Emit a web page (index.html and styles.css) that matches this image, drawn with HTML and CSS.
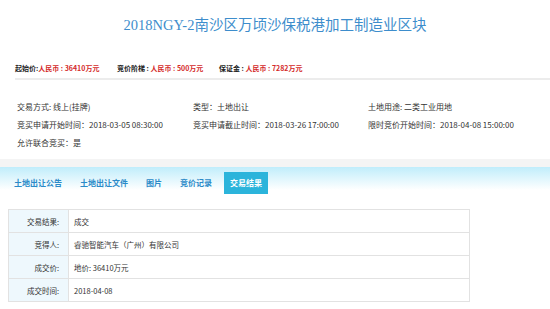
FILE: index.html
```html
<!DOCTYPE html>
<html lang="zh-CN">
<head>
    <meta charset="UTF-8">
    <title>2018NGY-2南沙区万顷沙保税港加工制造业区块</title>
    <link rel="stylesheet" href="styles.css">
</head>
<body>
    <h1 class="title">2018NGY-2南沙区万顷沙保税港加工制造业区块</h1>

    <div class="prices">
        <div class="price-item">起始价:<span class="red">人民币 : 36410万元</span></div>
        <div class="price-item">竞价阶梯 : <span class="red">人民币 : 500万元</span></div>
        <div class="price-item">保证金 : <span class="red">人民币 : 7282万元</span></div>
    </div>

    <div class="info">
        <div>交易方式: 线上(挂牌)</div>
        <div>类型：土地出让</div>
        <div>土地用途: 二类工业用地</div>
        <div>竞买申请开始时间：2018-03-05 08:30:00</div>
        <div>竞买申请截止时间：2018-03-26 17:00:00</div>
        <div>限时竞价开始时间：2018-04-08 15:00:00</div>
        <div>允许联合竞买：是</div>
    </div>

    <div class="band"></div>

    <div class="tabs">
        <div class="tab">土地出让公告</div>
        <div class="tab">土地出让文件</div>
        <div class="tab">图片</div>
        <div class="tab">竞价记录</div>
        <div class="tab active">交易结果</div>
    </div>

    <table class="result">
        <tr><th>交易结果:</th><td>成交</td></tr>
        <tr><th>竞得人:</th><td>睿驰智能汽车（广州）有限公司</td></tr>
        <tr><th>成交价:</th><td>地价: 36410万元</td></tr>
        <tr><th>成交时间:</th><td>2018-04-08</td></tr>
    </table>
</body>
</html>
```

FILE: styles.css
```css
body {
    margin: 0;
    font-family: "Noto Sans CJK SC", sans-serif;
    color: #333;
    background: #fff;
}
.title {
    margin: 0;
    padding-top: 15px;
    line-height: 20px;
    text-align: center;
    font-family: "Liberation Serif", "Noto Sans CJK SC", serif;
    font-weight: normal;
    font-size: 14.5px;
    color: #3d8dcc;
}
.prices {
    display: flex;
    margin: 27px 0 0 15px;
    padding-bottom: 4px;
    border-bottom: 2px solid #ececec;
    font-size: 7px;
    line-height: 12px;
    font-weight: bold;
    color: #222;
}
.price-item {
    width: 102px;
}
.red {
    color: #d42a2a;
}
.info {
    display: grid;
    grid-template-columns: 176px 175px 1fr;
    padding: 18px 0 0 17px;
    font-size: 8px;
    line-height: 18px;
    color: #333;
}
.band {
    margin-top: 7px;
    height: 8px;
    background: #f4f4f4;
}
.tabs {
    display: flex;
    gap: 6px;
    padding: 5px 0 0 8px;
    background: linear-gradient(#c0edfb, #fff 23px);
}
.tab {
    padding: 0 6px;
    height: 22px;
    line-height: 21px;
    font-size: 8px;
    font-weight: bold;
    color: #2a8ac8;
}
.tab.active {
    background: #2bb4db;
    color: #fff;
}
.result {
    margin: 15px 0 0 8px;
    width: 462px;
    border-collapse: collapse;
    font-size: 7.5px;
}
.result th,
.result td {
    height: 22px;
    padding: 0;
    border: 1px solid #e2e2e2;
}
.result th {
    width: 50px;
    padding-right: 9px;
    text-align: right;
    font-weight: normal;
    background: #eef8fd;
}
.result td {
    padding-left: 5px;
    text-align: left;
}
```
